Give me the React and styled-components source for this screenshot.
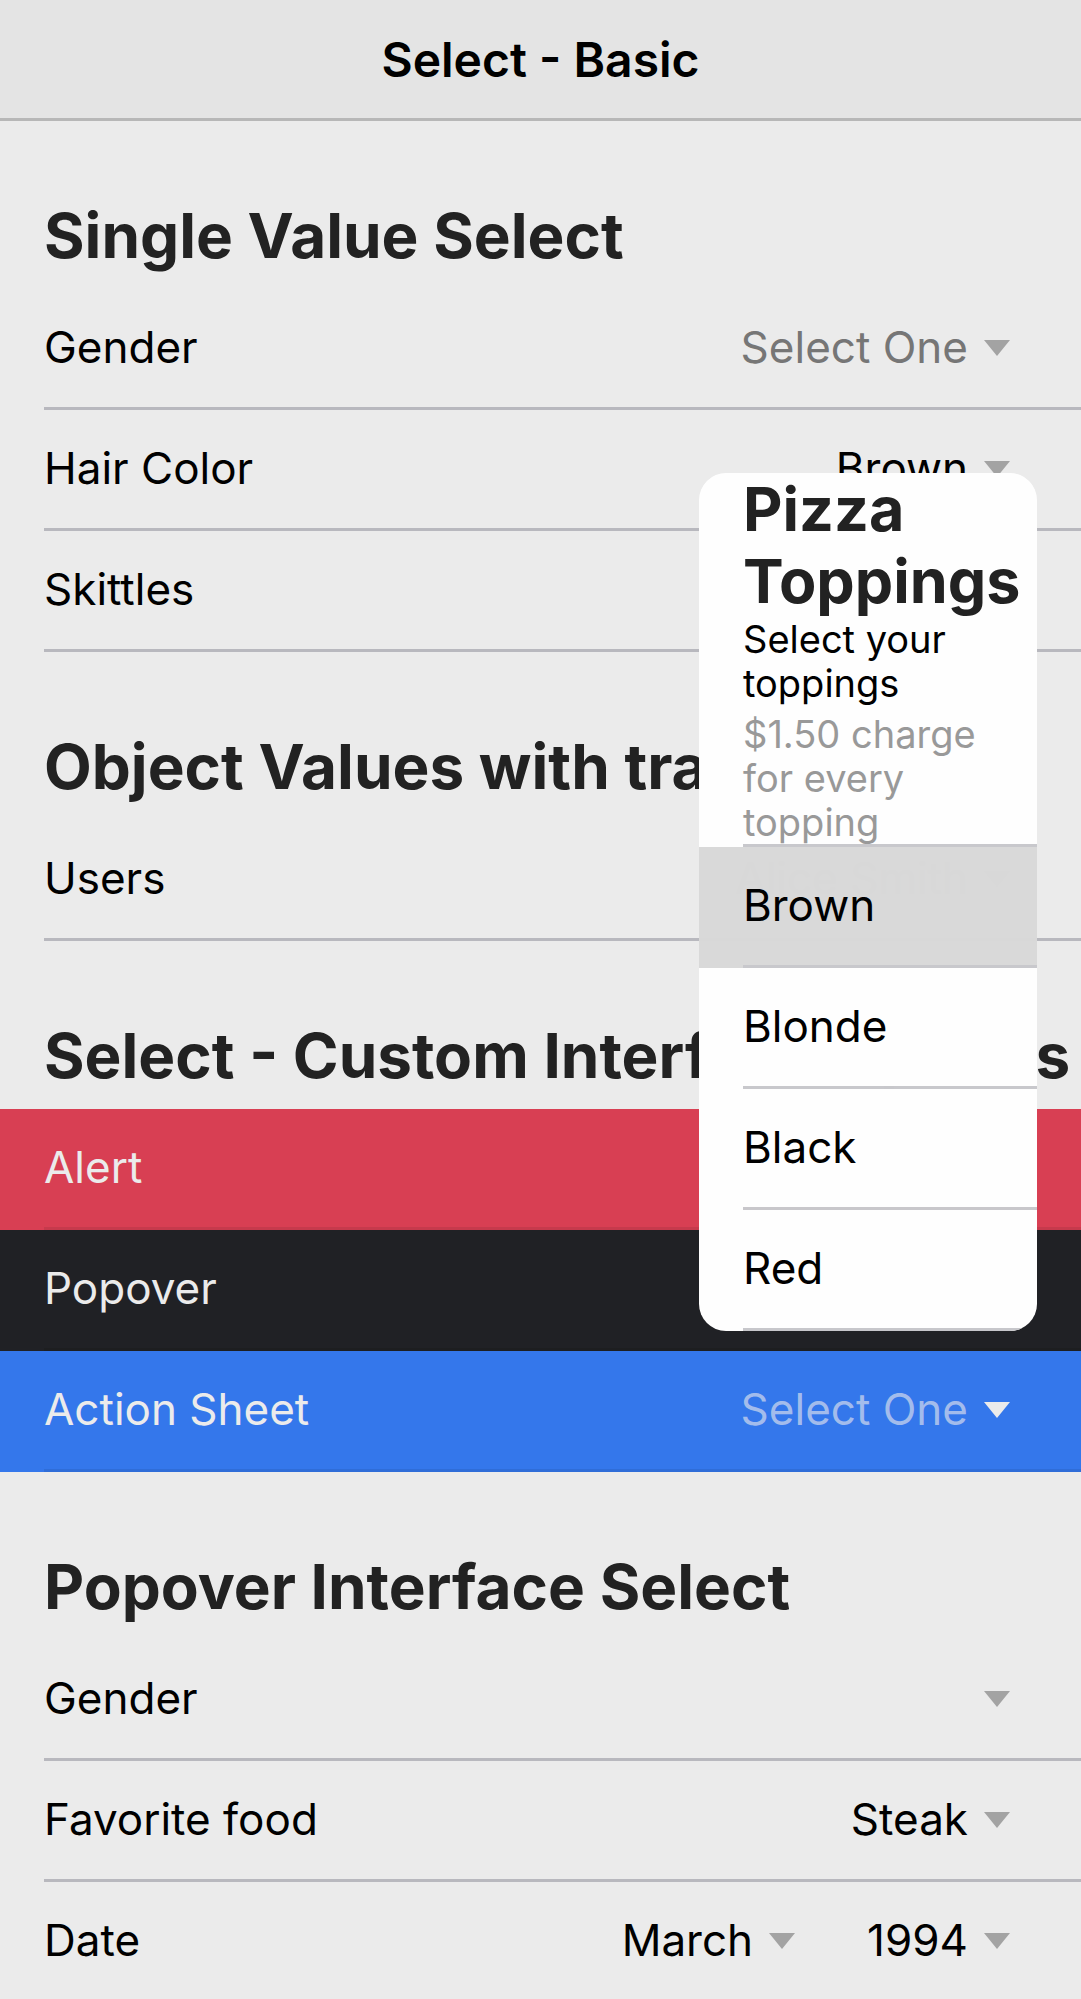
import React from "react";
import styled, { createGlobalStyle } from "styled-components";

const GlobalStyle = createGlobalStyle`
  *, *::before, *::after { box-sizing: border-box; }
  body {
    margin: 0;
    overflow: hidden;
    background: #ebebeb;
    color: #000;
    font-family: Inter, "Liberation Sans", sans-serif;
    font-size: 44px;
    line-height: 52px;
  }
`;

const Page = styled.div`
  position: relative;
  height: 100vh;
  overflow: hidden;
`;

const Toolbar = styled.header`
  display: flex;
  align-items: center;
  justify-content: center;
  height: 121px;
  padding-top: 2px;
  background: #e4e4e4;
  border-bottom: 3px solid #b7b7b7;
`;

const ToolbarTitle = styled.h1`
  margin: 0;
  font-size: 48px;
  font-weight: 600;
  line-height: 56px;
`;

const SectionTitle = styled.h2`
  margin: 0;
  padding: 79px 0 17px 44px;
  color: #222;
  font-size: 62px;
  font-weight: 700;
  line-height: 72px;
  white-space: nowrap;
`;

const tones = {
  plain: { bg: "transparent", text: "#000", muted: "#767676", arrow: "#a3a3a3", line: "#b8b8be" },
  danger: { bg: "#d83f53", text: "#ebebeb", muted: "#e2959f", arrow: "#ebebeb", line: "#c63a4c" },
  dark: { bg: "#202125", text: "#ebebeb", muted: "#868789", arrow: "#ebebeb", line: "#1d1e20" },
  primary: { bg: "#3477eb", text: "#ebebeb", muted: "#a3bcec", arrow: "#ebebeb", line: "#2f6dd8" },
};

const Item = styled.div`
  height: 121px;
  padding-left: 44px;
  background: ${(p) => p.$tone.bg};
  color: ${(p) => p.$tone.text};
`;

const ItemInner = styled.div`
  display: flex;
  align-items: center;
  height: 100%;
  padding-right: 71px;
  border-bottom: 3px solid ${(p) => p.$tone.line};
`;

const ItemLabel = styled.label`
  flex: 1;
  padding-bottom: 2px;
`;

const Picker = styled.span`
  display: flex;
  align-items: center;
  margin-left: 72px;
`;

/* The select's right padding runs under the arrow so the arrow is part of its hit area. */
const NativeSelect = styled.select`
  appearance: none;
  field-sizing: content;
  margin: 0 -26px 0 0;
  padding: 0 42px 2px 0;
  border: 0;
  outline: 0;
  background: none;
  color: ${(p) => (p.$muted ? p.$tone.muted : p.$tone.text)};
  font: inherit;
`;

const Arrow = styled.svg`
  display: block;
  width: 26px;
  height: 16px;
  fill: ${(p) => p.$tone.arrow};
  pointer-events: none;
`;

const Popover = styled.aside`
  position: absolute;
  top: 473px;
  right: 44px;
  width: 338px;
  overflow: hidden;
  border-radius: 27px;
  background: #fff;
  opacity: 0.996;
`;

const PopoverHeader = styled.div`
  margin-left: 44px;
  border-bottom: 3px solid #c8c8cc;
  font-size: 38px;
  line-height: 44px;
`;

const PopoverTitle = styled.h2`
  margin: 0;
  color: #222;
  font-size: 61px;
  font-weight: 700;
  line-height: 72px;
`;

const PopoverText = styled.p`
  margin: 0;
  padding-right: 16px;
`;

const PopoverNote = styled(PopoverText)`
  padding-top: 7px;
  color: #999;
`;

const Option = styled.button`
  display: block;
  width: 100%;
  height: 121px;
  padding: 0 0 0 44px;
  border: 0;
  background: ${(p) => (p.$selected ? "#d9d9d9" : "transparent")};
  color: #000;
  font: inherit;
  text-align: left;
`;

const OptionLabel = styled.span`
  display: flex;
  align-items: center;
  height: 100%;
  padding-bottom: 2px;
  border-bottom: 3px solid #c8c8cc;
`;

function Select({ id, label, value, muted, tone }) {
  return (
    <Picker>
      <NativeSelect id={id} aria-label={label} defaultValue={value} $muted={muted} $tone={tone}>
        <option>{value}</option>
      </NativeSelect>
      <Arrow $tone={tone} viewBox="0 0 26 16" aria-hidden="true">
        <path d="M0 0H26L13 16Z" />
      </Arrow>
    </Picker>
  );
}

const sections = [
  {
    title: "Single Value Select",
    items: [
      { label: "Gender", values: ["Select One"], muted: true },
      { label: "Hair Color", values: ["Brown"] },
      { label: "Skittles", values: [""] },
    ],
  },
  {
    title: "Object Values with trackBy",
    items: [{ label: "Users", values: ["Alice Smith"] }],
  },
  {
    title: "Select - Custom Interface Options",
    items: [
      { label: "Alert", values: ["Bacon"], tone: "danger" },
      { label: "Popover", values: ["Select One"], tone: "dark", muted: true },
      { label: "Action Sheet", values: ["Select One"], tone: "primary", muted: true },
    ],
  },
  {
    title: "Popover Interface Select",
    items: [
      { label: "Gender", values: [""] },
      { label: "Favorite food", values: ["Steak"] },
      { label: "Date", values: ["March", "1994"] },
    ],
  },
];

const options = ["Brown", "Blonde", "Black", "Red"];

export default function App() {
  return (
    <>
      <GlobalStyle />
      <Page>
        <Toolbar>
          <ToolbarTitle>Select - Basic</ToolbarTitle>
        </Toolbar>
        <main>
          {sections.map((section, s) => (
            <section key={section.title}>
              <SectionTitle>{section.title}</SectionTitle>
              {section.items.map((item, i) => {
                const tone = tones[item.tone || "plain"];
                const id = `select-${s}-${i}`;
                return (
                  <Item key={item.label} $tone={tone}>
                    <ItemInner $tone={tone}>
                      <ItemLabel htmlFor={`${id}-0`}>{item.label}</ItemLabel>
                      {item.values.map((value, v) => (
                        <Select
                          key={v}
                          id={`${id}-${v}`}
                          label={item.label}
                          value={value}
                          muted={item.muted}
                          tone={tone}
                        />
                      ))}
                    </ItemInner>
                  </Item>
                );
              })}
            </section>
          ))}
        </main>
        <Popover aria-label="Hair Color">
          <PopoverHeader>
            <PopoverTitle>Pizza Toppings</PopoverTitle>
            <PopoverText>Select your toppings</PopoverText>
            <PopoverNote>$1.50 charge for every topping</PopoverNote>
          </PopoverHeader>
          {options.map((option, i) => (
            <Option key={option} type="button" aria-pressed={i === 0} $selected={i === 0}>
              <OptionLabel>{option}</OptionLabel>
            </Option>
          ))}
        </Popover>
      </Page>
    </>
  );
}
